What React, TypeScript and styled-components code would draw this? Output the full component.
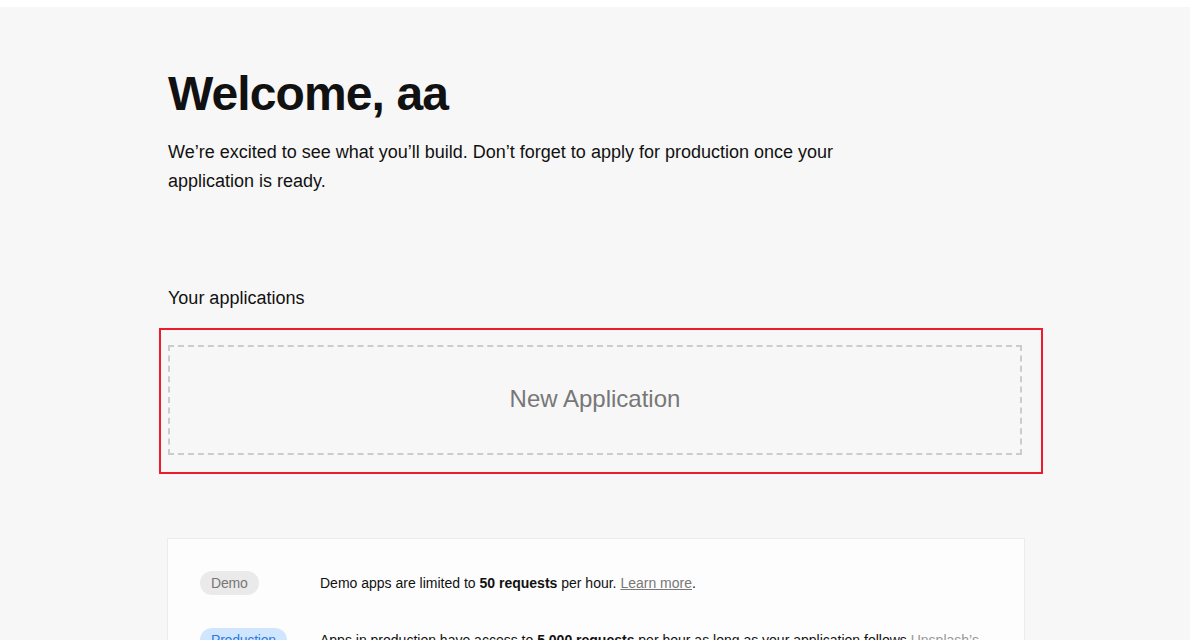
import styled, { createGlobalStyle } from 'styled-components'

const GlobalStyle = createGlobalStyle`
    body {
        margin: 0;
        background: #f7f7f7;
        font-family: "Liberation Sans", Arial, sans-serif;
        color: #111;
    }
`

const TopStrip = styled.div`
    height: 7px;
    background: #fff;
`

const Page = styled.main`
    width: 856px;
    margin: 0 calc(50% - 427px);
    padding-top: 58px;
`

const Heading = styled.h1`
    margin: 0;
    font-size: 48px;
    line-height: 57.6px;
    font-weight: 700;
    letter-spacing: -0.9px;
    color: #111;
`

const Intro = styled.p`
    margin: 15px 0 0;
    max-width: 690px;
    font-size: 18px;
    line-height: 29px;
    color: #111;
`

const SectionTitle = styled.h2`
    margin: 89px 0 0;
    font-size: 18px;
    line-height: 27px;
    font-weight: 400;
    color: #111;
`

// red highlight around the new app tile
const Highlight = styled.div`
    margin: 16px -19px 0 -9px;
    padding: 15px 19px 17px 7px;
    border: 2px solid #ec1c2b;
`

const NewAppTile = styled.button`
    display: flex;
    align-items: center;
    justify-content: center;
    width: 100%;
    height: 110px;
    box-sizing: border-box;
    border: 2px dashed #cccccc;
    background: transparent;
    font-family: inherit;
    font-size: 24px;
    color: #777;
    cursor: pointer;
    padding: 0 0 2px;
`

const InfoCard = styled.section`
    margin-top: 64px;
    margin-left: -1px;
    margin-right: -1px;
    background: #fdfdfd;
    border: 1px solid #ececec;
    padding: 32px 32px;
    display: flex;
    flex-direction: column;
    gap: 32px;
`

const InfoRow = styled.div`
    display: flex;
    align-items: flex-start;
`

const BadgeCell = styled.div`
    width: 120px;
    flex-shrink: 0;
`

const Badge = styled.span<{ $tone: 'demo' | 'production' }>`
    display: inline-block;
    height: 24px;
    line-height: 25px;
    padding: 0 11px;
    border-radius: 12px;
    font-size: 14px;
    letter-spacing: -0.2px;
    background: ${p => (p.$tone === 'demo' ? '#eaeaea' : '#d0e6ff')};
    color: ${p => (p.$tone === 'demo' ? '#777' : '#2b7be4')};
`

const InfoText = styled.p`
    margin: 0;
    font-size: 14px;
    line-height: 25px;
    color: #111;
`

const MutedLink = styled.a<{ $underline?: boolean }>`
    color: ${p => (p.$underline ? '#777' : '#999')};
    text-decoration: ${p => (p.$underline ? 'underline' : 'none')};
`

const App = () => {
    return (
        <>
            <GlobalStyle />
            <TopStrip />
            <Page>
                <Heading>Welcome, aa</Heading>
                <Intro>
                    We’re excited to see what you’ll build. Don’t forget to apply for production once your application is ready.
                </Intro>

                <SectionTitle>Your applications</SectionTitle>
                <Highlight>
                    <NewAppTile>New Application</NewAppTile>
                </Highlight>

                <InfoCard>
                    <InfoRow>
                        <BadgeCell><Badge $tone="demo">Demo</Badge></BadgeCell>
                        <InfoText>
                            Demo apps are limited to <b>50 requests</b> per hour. <MutedLink $underline href="#">Learn more</MutedLink>.
                        </InfoText>
                    </InfoRow>
                    <InfoRow>
                        <BadgeCell><Badge $tone="production">Production</Badge></BadgeCell>
                        <InfoText>
                            Apps in production have access to <b>5,000 requests</b> per hour as long as your application follows <MutedLink href="#">Unsplash’s API Guidelines</MutedLink>.
                        </InfoText>
                    </InfoRow>
                </InfoCard>
            </Page>
        </>
    )
}

export default App
